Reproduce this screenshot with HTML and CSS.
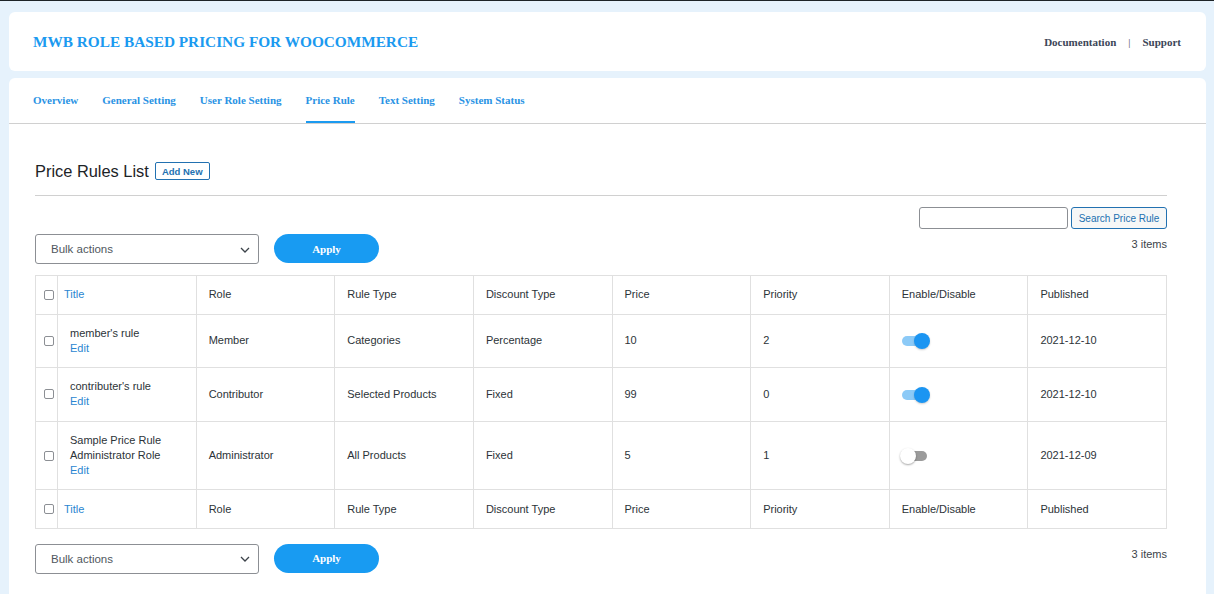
FILE: index.html
```html
<!DOCTYPE html>
<html>
<head>
<meta charset="utf-8">
<link rel="stylesheet" href="styles.css">
</head>
<body>
<div class="adminbar"></div>
<div class="page">
  <header class="card header">
    <h1 class="brand">MWB ROLE BASED PRICING FOR WOOCOMMERCE</h1>
    <nav class="toplinks">
      <a href="#">Documentation</a>
      <span class="sep">|</span>
      <a href="#">Support</a>
    </nav>
  </header>

  <main class="card main">
    <nav class="tabs">
      <a href="#" class="tab">Overview</a>
      <a href="#" class="tab">General Setting</a>
      <a href="#" class="tab">User Role Setting</a>
      <a href="#" class="tab active">Price Rule</a>
      <a href="#" class="tab">Text Setting</a>
      <a href="#" class="tab">System Status</a>
    </nav>

    <section class="content">
      <div class="titlebar">
        <h2 class="page-title">Price Rules List</h2>
        <a href="#" class="add-new">Add New</a>
      </div>
      <hr class="divider">

      <div class="search-row">
        <input type="text" class="search-input">
        <button class="search-btn">Search Price Rule</button>
      </div>

      <div class="tablenav">
        <div class="bulk">
          <div class="select"><span>Bulk actions</span>
            <svg class="chev" width="10" height="6" viewBox="0 0 10 6"><path d="M1 1l4 4 4-4" fill="none" stroke="#3c434a" stroke-width="1.3"/></svg>
          </div>
          <button class="apply">Apply</button>
        </div>
        <div class="count">3 items</div>
      </div>

      <table class="rules">
        <thead>
          <tr>
            <th class="cb"><span class="check"></span></th>
            <th class="title-col"><a href="#">Title</a></th>
            <th>Role</th>
            <th>Rule Type</th>
            <th>Discount Type</th>
            <th>Price</th>
            <th>Priority</th>
            <th>Enable/Disable</th>
            <th>Published</th>
          </tr>
        </thead>
        <tbody>
          <tr>
            <td class="cb"><span class="check"></span></td>
            <td class="name">member's rule<br><a href="#">Edit</a></td>
            <td>Member</td>
            <td>Categories</td>
            <td>Percentage</td>
            <td>10</td>
            <td>2</td>
            <td><span class="toggle on"><span class="knob"></span></span></td>
            <td>2021-12-10</td>
          </tr>
          <tr>
            <td class="cb"><span class="check"></span></td>
            <td class="name">contributer's rule<br><a href="#">Edit</a></td>
            <td>Contributor</td>
            <td>Selected Products</td>
            <td>Fixed</td>
            <td>99</td>
            <td>0</td>
            <td><span class="toggle on"><span class="knob"></span></span></td>
            <td>2021-12-10</td>
          </tr>
          <tr>
            <td class="cb"><span class="check"></span></td>
            <td class="name">Sample Price Rule<br>Administrator Role<br><a href="#">Edit</a></td>
            <td>Administrator</td>
            <td>All Products</td>
            <td>Fixed</td>
            <td>5</td>
            <td>1</td>
            <td><span class="toggle"><span class="knob"></span></span></td>
            <td>2021-12-09</td>
          </tr>
        </tbody>
        <tfoot>
          <tr>
            <th class="cb"><span class="check"></span></th>
            <th class="title-col"><a href="#">Title</a></th>
            <th>Role</th>
            <th>Rule Type</th>
            <th>Discount Type</th>
            <th>Price</th>
            <th>Priority</th>
            <th>Enable/Disable</th>
            <th>Published</th>
          </tr>
        </tfoot>
      </table>

      <div class="tablenav bottom">
        <div class="bulk">
          <div class="select"><span>Bulk actions</span>
            <svg class="chev" width="10" height="6" viewBox="0 0 10 6"><path d="M1 1l4 4 4-4" fill="none" stroke="#3c434a" stroke-width="1.3"/></svg>
          </div>
          <button class="apply">Apply</button>
        </div>
        <div class="count">3 items</div>
      </div>
    </section>
  </main>
</div>
</body>
</html>
```

FILE: styles.css
```css
* { box-sizing: border-box; }
html, body { margin: 0; padding: 0; }
body {
  background: #e6f2fc;
  font-family: "Liberation Sans", Arial, sans-serif;
  color: #2c3338;
  height: 594px;
  overflow: hidden;
}
.adminbar { height: 1px; background: #1d2327; }
.page { padding: 11px 8px 0 9px; }
.card { background: #fff; border-radius: 6px; }

.header {
  height: 59px;
  display: flex;
  align-items: center;
  justify-content: space-between;
  padding: 0 25px 0 24px;
}
.brand {
  margin: 0;
  font-family: "Liberation Serif", "Times New Roman", serif;
  font-weight: bold;
  font-size: 15.3px;
  color: #1b9af0;
  padding-top: 1px;
}
.toplinks {
  display: flex;
  align-items: center;
  gap: 12px;
  font-family: "Liberation Serif", "Times New Roman", serif;
  font-weight: bold;
  font-size: 11px;
}
.toplinks a { color: #3c4658; text-decoration: none; }
.toplinks .sep { color: #3c4658; font-weight: normal; }

.main {
  margin-top: 7px;
  min-height: 520px;
  border-radius: 6px 6px 0 0;
}
.tabs {
  display: flex;
  gap: 24px;
  padding: 0 24px;
  height: 46px;
  border-bottom: 1px solid #d0d0d0;
}
.tab {
  display: flex;
  align-items: center;
  height: 45px;
  padding-top: 1px;
  font-family: "Liberation Serif", "Times New Roman", serif;
  font-weight: bold;
  font-size: 11px;
  color: #2a93e4;
  text-decoration: none;
  border-bottom: 2px solid transparent;
}
.tab.active { border-bottom-color: #1b9af0; }

.content { padding: 38px 39px 0 26px; }
.titlebar { display: flex; align-items: center; height: 18px; gap: 6px; }
.page-title {
  margin: 0;
  font-weight: normal;
  font-size: 16.4px;
  color: #1d2327;
}
.add-new {
  display: inline-flex;
  align-items: center;
  height: 18px;
  padding: 0 6px;
  border: 1px solid #2271b1;
  border-radius: 2px;
  color: #2271b1;
  font-size: 9.5px;
  font-weight: bold;
  text-decoration: none;
}
.divider { margin: 15px 0 0; border: 0; border-top: 1px solid #d0d0d0; }

.search-row { display: flex; justify-content: flex-end; gap: 3px; margin-top: 11px; }
.search-input {
  width: 149px; height: 22px;
  border: 1px solid #8c8f94; border-radius: 3px;
  margin: 0; padding: 0;
}
.search-btn {
  width: 96px; height: 22px;
  border: 1px solid #2271b1; border-radius: 3px;
  background: #f6f7f7; color: #2271b1;
  font-family: "Liberation Sans", Arial, sans-serif;
  font-size: 10px; padding: 0;
}

.tablenav { display: flex; justify-content: space-between; align-items: flex-start; margin-top: 5px; }
.tablenav.bottom { margin-top: 15px; }
.bulk { display: flex; align-items: flex-start; gap: 15px; }
.select {
  width: 224px; height: 30px;
  border: 1px solid #8c8f94; border-radius: 3px;
  display: flex; align-items: center; justify-content: space-between;
  padding: 0 8px 0 15px;
  font-size: 11.5px; color: #50575e;
}
.chev { margin-top: 1px; }
.apply {
  width: 105px; height: 29px;
  border: 0; border-radius: 15px;
  background: #189bf2; color: #fff;
  font-family: "Liberation Serif", "Times New Roman", serif;
  font-weight: bold; font-size: 11px;
  padding: 0;
}
.count { font-size: 11px; color: #3c434a; margin-top: 4px; }

.rules {
  width: 100%;
  margin-top: 11px;
  border-collapse: collapse;
  table-layout: fixed;
  border: 1px solid #e0e0e0;
  font-size: 11px;
}
.rules th, .rules td {
  border: 1px solid #e0e0e0;
  text-align: left;
  font-weight: normal;
  line-height: 15px;
  padding: 11.3px 12px;
  vertical-align: middle;
  color: #2c3338;
}
.rules .cb { width: 22px; padding: 0 0 0 8px; }
.rules .title-col { padding-left: 6px; }
.rules a { color: #2a86d1; text-decoration: none; }
.check {
  display: block;
  width: 10px; height: 10px;
  border: 1px solid #8c8f94;
  border-radius: 2px;
  background: #fff;
}
.toggle {
  display: block;
  position: relative;
  width: 25px; height: 10px;
  border-radius: 5px;
  background: #9b9b9b;
  margin-top: 1px;
}
.toggle .knob {
  position: absolute;
  top: -3px; left: -2px;
  width: 16px; height: 16px;
  border-radius: 50%;
  background: #fff;
  box-shadow: 0 1px 2px rgba(0,0,0,0.35);
}
.toggle.on { background: #8ccaf7; }
.toggle.on .knob { left: 12px; background: #1b95f2; box-shadow: 0 1px 2px rgba(0,0,0,0.2); }
```
